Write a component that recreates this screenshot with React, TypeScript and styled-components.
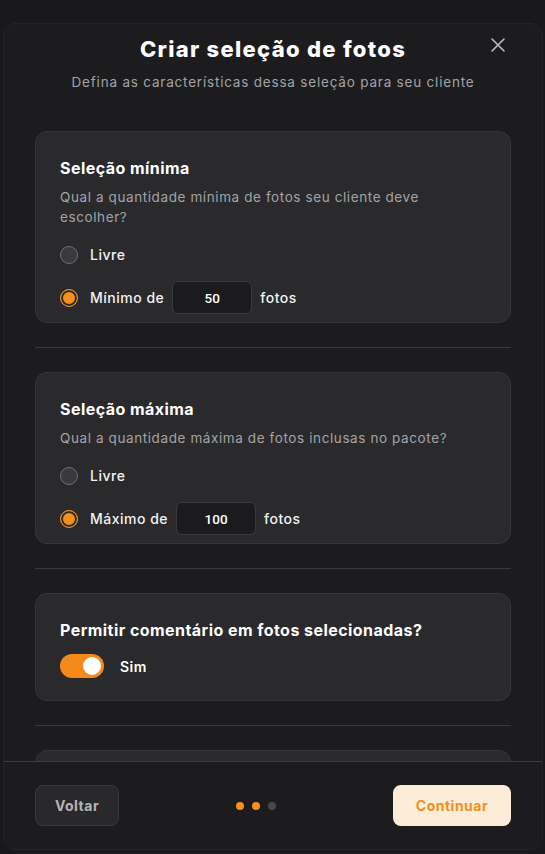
import React, { useState } from "react";
import styled, { createGlobalStyle } from "styled-components";

const GlobalStyle = createGlobalStyle`
  * { box-sizing: border-box; }
  html, body {
    margin: 0;
    padding: 0;
    background: #19191b;
    font-family: "Inter", "Noto Sans", sans-serif;
    color: #ffffff;
  }
`;

const Page = styled.div`
  width: 545px;
  height: 854px;
  padding: 23px 2px 0 3px;
  background: #19191b;
  overflow: hidden;
`;

const Modal = styled.div`
  height: 827px;
  background: #1c1c1f;
  border: 1px solid #242427;
  border-radius: 12px;
  display: flex;
  flex-direction: column;
  overflow: hidden;
`;

const Header = styled.header`
  position: relative;
  padding: 10px 32px 0;
  text-align: center;
`;

const Title = styled.h1`
  margin: 0;
  font-size: 22px;
  line-height: 30px;
  font-weight: 800;
  letter-spacing: 1.3px;
`;

const Subtitle = styled.p`
  margin: 8px 0 0;
  font-size: 13.5px;
  line-height: 20px;
  letter-spacing: 0.8px;
  color: #a3a3a6;
`;

const CloseButton = styled.button`
  position: absolute;
  top: 10px;
  right: 33px;
  width: 22px;
  height: 22px;
  padding: 0;
  border: none;
  background: none;
  color: #bdbdc0;
  display: flex;
  align-items: center;
  justify-content: center;
`;

const Body = styled.div`
  flex: 1;
  overflow: hidden;
  padding: 39px 31px 0 31px;
  display: flex;
  flex-direction: column;
  gap: 24px;
`;

const Card = styled.section<{ $bottom?: number }>`
  flex-shrink: 0;
  background: #2a2a2d;
  border: 1px solid #36363a;
  border-radius: 12px;
  padding: 25px 24px ${(p) => p.$bottom ?? 22}px;
  min-height: 60px;
`;

const Divider = styled.hr`
  flex-shrink: 0;
  margin: 0;
  border: none;
  height: 1px;
  background: #3b3b3f;
`;

const CardTitle = styled.h2`
  margin: 0;
  font-size: 16px;
  line-height: 22px;
  font-weight: 700;
  letter-spacing: 0.45px;
`;

const CardText = styled.p`
  margin: 8px 0 11px;
  font-size: 13.5px;
  line-height: 20px;
  letter-spacing: 0.6px;
  color: #a3a3a7;
`;

const Options = styled.div`
  display: flex;
  flex-direction: column;
  gap: 10px;
`;

const OptionRow = styled.label`
  display: flex;
  align-items: center;
  height: 33px;
  gap: 8px;
  font-size: 14px;
  font-weight: 500;
  letter-spacing: 0.5px;
  color: #f2f2f3;
  white-space: nowrap;
  cursor: pointer;
`;

const RadioDot = styled.span<{ $checked: boolean }>`
  width: 18px;
  height: 18px;
  margin-right: 4px;
  border-radius: 50%;
  flex-shrink: 0;
  border: 1.5px solid ${(p) => (p.$checked ? "#f5901b" : "#6e6e72")};
  background: ${(p) => (p.$checked ? "#f5901b" : "#3a3a3d")};
  box-shadow: ${(p) => (p.$checked ? "inset 0 0 0 2px #2a2a2d" : "none")};
`;

const NumberInput = styled.input`
  width: 80px;
  height: 33px;
  border: 1px solid #3a3a3e;
  border-radius: 6px;
  background: #1b1b1d;
  color: #ffffff;
  text-align: center;
  font-family: "Roboto", "Liberation Sans", sans-serif;
  font-size: 13.5px;
  font-weight: 500;
  letter-spacing: 0;
  outline: none;
`;

const ToggleRow = styled.div`
  display: flex;
  align-items: center;
  gap: 16px;
  margin-top: 13px;
  font-size: 14px;
  font-weight: 600;
  letter-spacing: 0.5px;
`;

const Toggle = styled.button<{ $on: boolean }>`
  position: relative;
  width: 44px;
  height: 24px;
  padding: 0;
  border: none;
  border-radius: 12px;
  background: ${(p) => (p.$on ? "#f5891a" : "#4a4a4e")};
  cursor: pointer;

  &::after {
    content: "";
    position: absolute;
    top: 3px;
    left: ${(p) => (p.$on ? "23px" : "3px")};
    width: 18px;
    height: 18px;
    border-radius: 50%;
    background: #ffffff;
  }
`;

const Footer = styled.footer`
  flex-shrink: 0;
  height: 88px;
  border-top: 1px solid #3e3e42;
  background: #1c1c1f;
  padding: 0 31px;
  display: flex;
  align-items: center;
  justify-content: space-between;
`;

const BackButton = styled.button`
  width: 84px;
  height: 41px;
  padding: 0;
  border: 1px solid #3a3a3e;
  border-radius: 8px;
  background: #29292c;
  color: #b4b4b8;
  font-family: inherit;
  font-size: 14px;
  font-weight: 700;
  letter-spacing: 0.5px;
  white-space: nowrap;
`;

const NextButton = styled.button`
  width: 118px;
  height: 41px;
  padding: 0;
  border: none;
  border-radius: 8px;
  background: #fdecd8;
  color: #f0901e;
  font-family: inherit;
  font-size: 14px;
  font-weight: 700;
  letter-spacing: 0.5px;
  white-space: nowrap;
`;

const Steps = styled.div`
  display: flex;
  gap: 8px;
`;

const StepDot = styled.span<{ $active: boolean }>`
  width: 8px;
  height: 8px;
  border-radius: 50%;
  background: ${(p) => (p.$active ? "#f5901b" : "#48484c")};
`;

type RadioProps = {
  checked: boolean;
  onSelect: () => void;
  children: React.ReactNode;
};

function Radio({ checked, onSelect, children }: RadioProps) {
  return (
    <OptionRow onClick={onSelect}>
      <RadioDot $checked={checked} />
      {children}
    </OptionRow>
  );
}

export default function App() {
  const [minMode, setMinMode] = useState<"free" | "min">("min");
  const [maxMode, setMaxMode] = useState<"free" | "max">("max");
  const [minValue, setMinValue] = useState("50");
  const [maxValue, setMaxValue] = useState("100");
  const [comments, setComments] = useState(true);

  return (
    <>
      <GlobalStyle />
      <Page>
        <Modal>
          <Header>
            <Title>Criar seleção de fotos</Title>
            <Subtitle>Defina as características dessa seleção para seu cliente</Subtitle>
            <CloseButton aria-label="Fechar">
              <svg width="16" height="16" viewBox="0 0 16 16" fill="none">
                <path d="M2 2L14 14M14 2L2 14" stroke="currentColor" strokeWidth="1.6" strokeLinecap="round" />
              </svg>
            </CloseButton>
          </Header>

          <Body>
            <Card $bottom={8}>
              <CardTitle>Seleção mínima</CardTitle>
              <CardText>Qual a quantidade mínima de fotos seu cliente deve escolher?</CardText>
              <Options>
                <Radio checked={minMode === "free"} onSelect={() => setMinMode("free")}>
                  Livre
                </Radio>
                <Radio checked={minMode === "min"} onSelect={() => setMinMode("min")}>
                  Mínimo de
                  <NumberInput value={minValue} onChange={(e) => setMinValue(e.target.value)} />
                  fotos
                </Radio>
              </Options>
            </Card>

            <Divider />

            <Card $bottom={8}>
              <CardTitle>Seleção máxima</CardTitle>
              <CardText>Qual a quantidade máxima de fotos inclusas no pacote?</CardText>
              <Options>
                <Radio checked={maxMode === "free"} onSelect={() => setMaxMode("free")}>
                  Livre
                </Radio>
                <Radio checked={maxMode === "max"} onSelect={() => setMaxMode("max")}>
                  Máximo de
                  <NumberInput value={maxValue} onChange={(e) => setMaxValue(e.target.value)} />
                  fotos
                </Radio>
              </Options>
            </Card>

            <Divider />

            <Card>
              <CardTitle>Permitir comentário em fotos selecionadas?</CardTitle>
              <ToggleRow>
                <Toggle $on={comments} onClick={() => setComments(!comments)} aria-label="Permitir comentário" />
                Sim
              </ToggleRow>
            </Card>

            <Divider />

            {/* next section, scrolled under the footer */}
            <Card />
          </Body>

          <Footer>
            <BackButton>Voltar</BackButton>
            <Steps>
              <StepDot $active />
              <StepDot $active />
              <StepDot $active={false} />
            </Steps>
            <NextButton>Continuar</NextButton>
          </Footer>
        </Modal>
      </Page>
    </>
  );
}
